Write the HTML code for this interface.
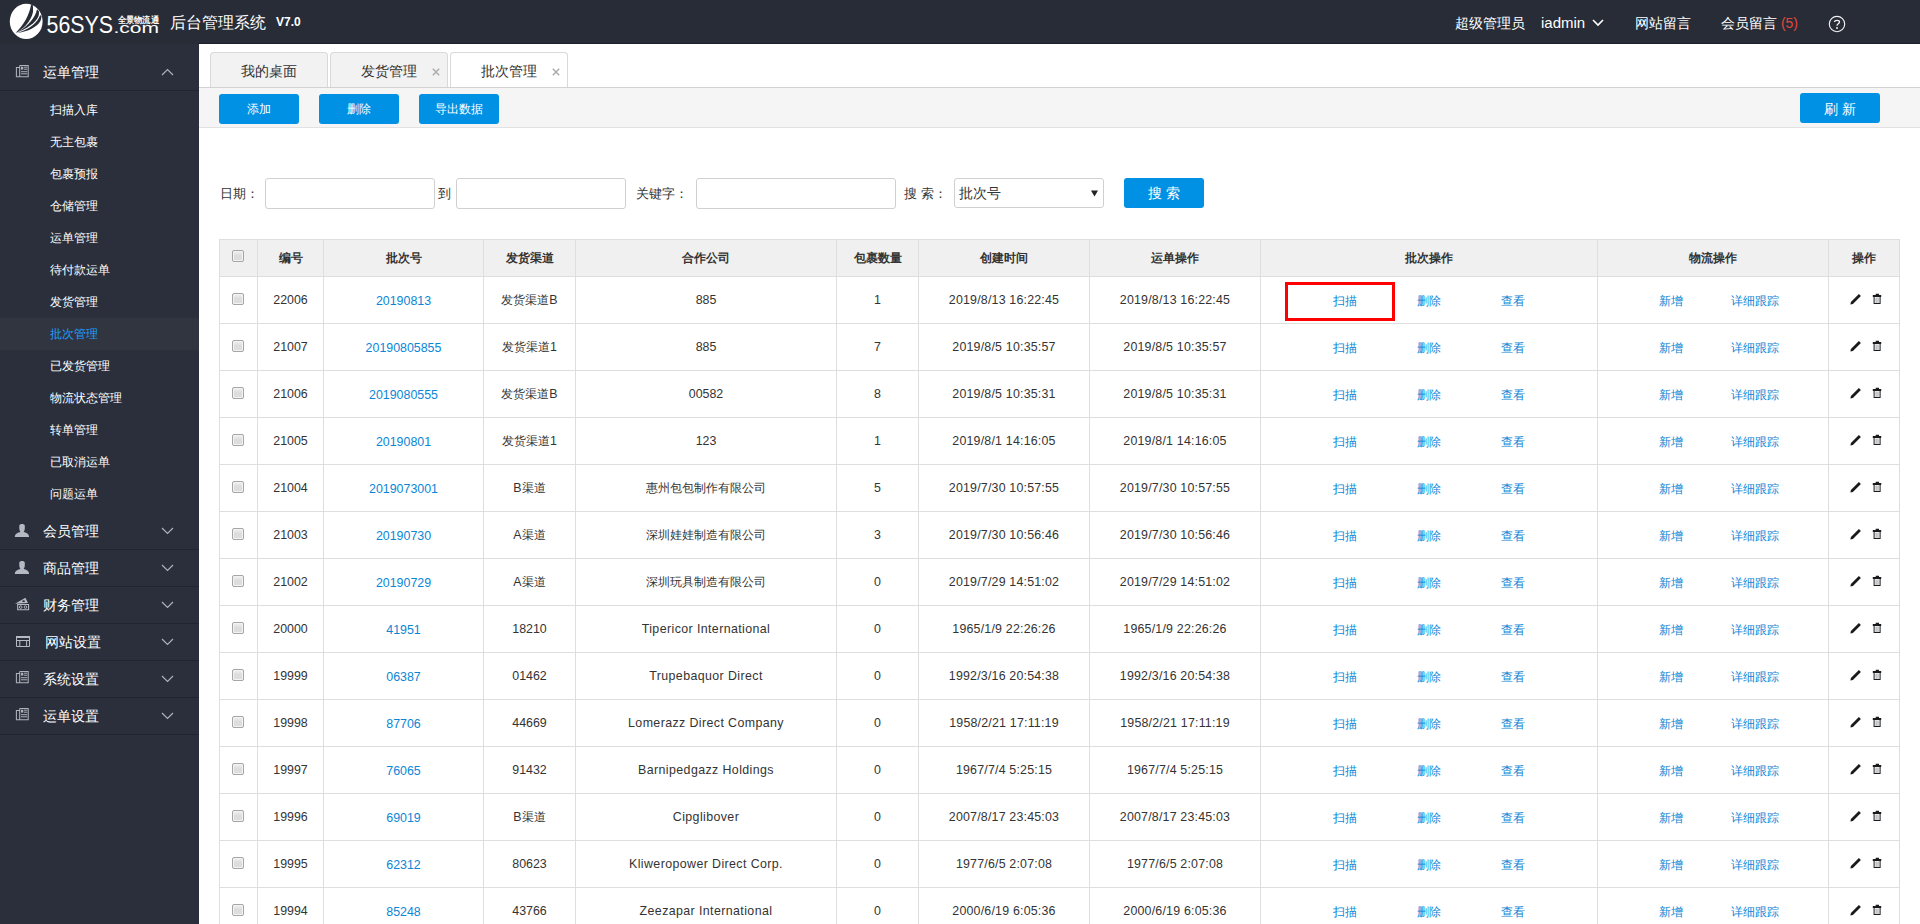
<!DOCTYPE html>
<html><head><meta charset="utf-8">
<style>
*{margin:0;padding:0;box-sizing:border-box}
html,body{width:1920px;height:924px;overflow:hidden;background:#fff;font-family:"Liberation Sans",sans-serif;color:#333}
.abs{position:absolute}
#hd{position:absolute;left:0;top:0;width:1920px;height:44px;background:#282c37}
#hdline{position:absolute;left:198px;top:43px;width:1722px;height:1px;background:#1c1f29}
#side{position:absolute;left:0;top:44px;width:199px;height:880px;background:#2a2f3b}
#sideline{position:absolute;left:198px;top:43px;width:1px;height:881px;background:#1c1f29}
.t{position:absolute;white-space:nowrap;line-height:1}
.hw{color:#fff;font-size:14px}
.grp{position:absolute;left:0;width:199px;height:37px;border-bottom:1px solid #22252f}
.gt{position:absolute;left:43px;top:11px;font-size:14px;color:#fff;line-height:14px}
.sub{position:absolute;left:50px;font-size:12px;color:#fff;line-height:12px}
.chev{position:absolute;left:161px;width:12px;height:8px}
#tabs .tab{position:absolute;top:52px;height:36px;width:118px;border:1px solid #d9d9d9;border-bottom:none;border-radius:4px 4px 0 0;background:#f2f2f2;font-size:14px;color:#333}
#tabs .tab.act{background:#fff}
#bar{position:absolute;left:199px;top:87px;width:1721px;height:41px;background:#f5f5f5;border-top:1px solid #d2d2d2;border-bottom:1px solid #e2e2e2}
.btn{position:absolute;height:30px;width:80px;background:#0091e5;border-radius:3px;color:#fff;font-size:12px;text-align:center;line-height:30px}
.inp{position:absolute;top:178px;height:31px;border:1px solid #d0d0d0;border-radius:3px;background:#fff}
.lbl{position:absolute;font-size:13px;color:#333;line-height:13px;top:187px}
table{position:absolute;left:219px;top:239px;border-collapse:collapse;table-layout:fixed;width:1680px}
td,th{border:1px solid #dedede;text-align:center;font-size:12.4px;color:#333;white-space:nowrap;overflow:hidden}
th{height:37px;background:#f0f0f0;font-weight:bold;font-size:12px;color:#333}
td{height:47px}
td a{color:#0a86d6}
.ops{position:relative}
.ops a{position:absolute;top:18px;font-size:12px;line-height:12px}
.cb{position:absolute;left:12px;top:16px;width:12px;height:12px;border:1px solid #a6a6a6;border-radius:2px;background:linear-gradient(#f2f2f2,#dddddd 45%,#dddddd);box-shadow:inset 0 0 0 1px #f3f3f3}
th .cb{top:10px}
td,th{position:relative}
td>a{position:relative;top:1px}
.en{letter-spacing:0.4px}
.dt{letter-spacing:0.2px}
.ic svg{position:absolute}
.ic{position:relative}
</style></head><body>
<div id="hd"></div>
<div id="side"></div>
<div id="hdline"></div>

<!-- logo -->
<svg class="abs" style="left:0;top:0" width="170" height="44" viewBox="0 0 170 44">
  <ellipse cx="26.2" cy="21.4" rx="16.4" ry="17.6" fill="#fff"/>
  <path d="M31 5 C29.5 14, 24 25, 15.5 33 C22 30, 31 22, 33 12 C33.2 9, 33 6, 32.7 5 Z" fill="#282c37"/>
  <path d="M37 9.3 C35.5 17, 29 26, 16.5 32.8 C26 29, 36 23, 38.6 16 C39 14, 39 12, 38.9 11.2 Z" fill="#282c37"/>
  <path d="M40.2 15 C38 22, 30 29, 17.5 33 C28 31.5, 37 27, 40.4 21 C41 19.5, 41.5 18, 41.5 16.5 Z" fill="#282c37"/>
  <text x="46.5" y="32.8" font-family="Liberation Sans" font-size="23.6" fill="#fff" textLength="66.5" lengthAdjust="spacingAndGlyphs">56SYS</text>
  <text x="113.5" y="32.8" font-family="Liberation Sans" font-size="15.4" fill="#fff" textLength="45.5" lengthAdjust="spacingAndGlyphs">.com</text>
  <text x="117.5" y="23" font-family="Liberation Sans" font-size="8.6" font-weight="bold" fill="#fff" textLength="41.5" lengthAdjust="spacingAndGlyphs">全景物流通</text>
</svg>
<div class="t" style="left:170px;top:15px;font-size:16px;color:#fff">后台管理系统</div>
<div class="t" style="left:276px;top:16px;font-size:12px;color:#fff;font-weight:bold">V7.0</div>

<div class="t hw" style="left:1455px;top:16px">超级管理员</div>
<div class="t hw" style="left:1541px;top:15px;font-size:15px">iadmin</div>
<svg class="abs" style="left:1592px;top:19px" width="12" height="8" viewBox="0 0 12 8"><path d="M1 1 L6 6 L11 1" stroke="#fff" stroke-width="1.6" fill="none"/></svg>
<div class="t hw" style="left:1635px;top:16px">网站留言</div>
<div class="t hw" style="left:1721px;top:16px">会员留言 <span style="color:#e0473c">(5)</span></div>
<svg class="abs" style="left:1828px;top:15px" width="18" height="18" viewBox="0 0 18 18"><circle cx="9" cy="9" r="7.7" stroke="#f2f2f2" stroke-width="1.15" fill="none"/><path d="M6.5 7 C6.5 4.7 11.5 4.7 11.5 7 C11.5 8.8 9 8.8 9 10.8" stroke="#f2f2f2" stroke-width="1.3" fill="none"/><circle cx="9" cy="13" r="0.9" fill="#fff"/></svg>

<!-- sidebar -->
<div class="grp" style="top:54px;height:37px"></div>
<svg class="abs" style="left:12px;top:62px" width="20" height="20" viewBox="0 0 20 20"><path d="M7.7 3.4h8.5v11.4H4.4V5.4h3.3 M7.7 3.4V14.8" stroke="#aeb2bb" stroke-width="1.05" fill="none"/><path d="M9 4.7h2.3v2.9H9z" fill="#aeb2bb"/><path d="M12 5.2h3.2 M12 7.2h3.2 M9 9.7h6.2 M9 11.8h6.2" stroke="#aeb2bb" stroke-width="1"/></svg>
<div class="gt" style="top:65px">运单管理</div>
<svg class="abs" style="left:161px;top:68px" width="13" height="8" viewBox="0 0 13 8"><path d="M1 7 L6.5 1.5 L12 7" stroke="#aeb2ba" stroke-width="1.2" fill="none"/></svg>

<div class="sub" style="top:104px">扫描入库</div>
<div class="sub" style="top:136px">无主包裹</div>
<div class="sub" style="top:168px">包裹预报</div>
<div class="sub" style="top:200px">仓储管理</div>
<div class="sub" style="top:232px">运单管理</div>
<div class="sub" style="top:264px">待付款运单</div>
<div class="sub" style="top:296px">发货管理</div>
<div class="abs" style="left:0;top:318px;width:199px;height:32px;background:#31353f"></div>
<div class="sub" style="top:328px;color:#1e9fff">批次管理</div>
<div class="sub" style="top:360px">已发货管理</div>
<div class="sub" style="top:392px">物流状态管理</div>
<div class="sub" style="top:424px">转单管理</div>
<div class="sub" style="top:456px">已取消运单</div>
<div class="sub" style="top:488px">问题运单</div>

<div class="grp" style="top:513px"></div>
<div class="grp" style="top:550px"></div>
<div class="grp" style="top:587px"></div>
<div class="grp" style="top:624px"></div>
<div class="grp" style="top:661px"></div>
<div class="grp" style="top:698px"></div>
<div class="gt" style="top:524px">会员管理</div>
<div class="gt" style="top:561px">商品管理</div>
<div class="gt" style="top:598px">财务管理</div>
<div class="gt" style="top:635px;left:45px">网站设置</div>
<div class="gt" style="top:672px">系统设置</div>
<div class="gt" style="top:709px">运单设置</div>
<svg class="abs" style="left:12px;top:520px" width="20" height="20" viewBox="0 0 20 20"><path d="M7.3 5.6 C7.3 3.3 12.8 3.3 12.8 5.6 L12.8 8.5 C12.8 10 12.1 11.2 11.7 12 C14.2 12.6 16.9 13.6 17.1 16.9 L2.8 16.9 C3.1 13.6 5.9 12.6 8.4 12 C8 11.2 7.3 10 7.3 8.5 Z" fill="#b5b9c2"/></svg>
<svg class="abs" style="left:161px;top:527px" width="13" height="8" viewBox="0 0 13 8"><path d="M1 1 L6.5 6.5 L12 1" stroke="#aeb2ba" stroke-width="1.2" fill="none"/></svg>
<svg class="abs" style="left:12px;top:557px" width="20" height="20" viewBox="0 0 20 20"><path d="M7.3 5.6 C7.3 3.3 12.8 3.3 12.8 5.6 L12.8 8.5 C12.8 10 12.1 11.2 11.7 12 C14.2 12.6 16.9 13.6 17.1 16.9 L2.8 16.9 C3.1 13.6 5.9 12.6 8.4 12 C8 11.2 7.3 10 7.3 8.5 Z" fill="#b5b9c2"/></svg>
<svg class="abs" style="left:161px;top:564px" width="13" height="8" viewBox="0 0 13 8"><path d="M1 1 L6.5 6.5 L12 1" stroke="#aeb2ba" stroke-width="1.2" fill="none"/></svg>
<svg class="abs" style="left:12px;top:594px" width="20" height="20" viewBox="0 0 20 20"><path d="M3 9.8 L13.4 3.8 L16 8.9 Z" fill="#b5b9c2"/><ellipse cx="11.6" cy="7.2" rx="1.3" ry="0.9" fill="#2a2f3b"/><path d="M5.7 10.5h10.9v5.2H5.7z" stroke="#b5b9c2" stroke-width="1.1" fill="none"/><circle cx="8.7" cy="13.1" r="1.3" stroke="#b5b9c2" stroke-width="1" fill="none"/><circle cx="13.5" cy="13.1" r="1.3" stroke="#b5b9c2" stroke-width="1" fill="none"/></svg>
<svg class="abs" style="left:161px;top:601px" width="13" height="8" viewBox="0 0 13 8"><path d="M1 1 L6.5 6.5 L12 1" stroke="#aeb2ba" stroke-width="1.2" fill="none"/></svg>
<svg class="abs" style="left:12px;top:631px" width="20" height="20" viewBox="0 0 20 20"><path d="M4.5 5.5h13v10h-13z M4.5 9.5h13 M7.8 9.5v6 M14.6 9.5v6" stroke="#b5b9c2" stroke-width="1" fill="none"/><path d="M4 5h14v2H4z" fill="#b5b9c2"/></svg>
<svg class="abs" style="left:161px;top:638px" width="13" height="8" viewBox="0 0 13 8"><path d="M1 1 L6.5 6.5 L12 1" stroke="#aeb2ba" stroke-width="1.2" fill="none"/></svg>
<svg class="abs" style="left:12px;top:668px" width="20" height="20" viewBox="0 0 20 20"><path d="M7.7 3.4h8.5v11.4H4.4V5.4h3.3 M7.7 3.4V14.8" stroke="#aeb2bb" stroke-width="1.05" fill="none"/><path d="M9 4.7h2.3v2.9H9z" fill="#aeb2bb"/><path d="M12 5.2h3.2 M12 7.2h3.2 M9 9.7h6.2 M9 11.8h6.2" stroke="#aeb2bb" stroke-width="1"/></svg>
<svg class="abs" style="left:161px;top:675px" width="13" height="8" viewBox="0 0 13 8"><path d="M1 1 L6.5 6.5 L12 1" stroke="#aeb2ba" stroke-width="1.2" fill="none"/></svg>
<svg class="abs" style="left:12px;top:705px" width="20" height="20" viewBox="0 0 20 20"><path d="M7.7 3.4h8.5v11.4H4.4V5.4h3.3 M7.7 3.4V14.8" stroke="#aeb2bb" stroke-width="1.05" fill="none"/><path d="M9 4.7h2.3v2.9H9z" fill="#aeb2bb"/><path d="M12 5.2h3.2 M12 7.2h3.2 M9 9.7h6.2 M9 11.8h6.2" stroke="#aeb2bb" stroke-width="1"/></svg>
<svg class="abs" style="left:161px;top:712px" width="13" height="8" viewBox="0 0 13 8"><path d="M1 1 L6.5 6.5 L12 1" stroke="#aeb2ba" stroke-width="1.2" fill="none"/></svg>

<!-- tabs -->
<div id="tabs">
 <div class="tab" style="left:210px"><span class="t" style="left:30px;top:11px">我的桌面</span></div>
 <div class="tab" style="left:330px"><span class="t" style="left:30px;top:11px">发货管理</span><svg class="abs" style="left:101px;top:15px" width="8" height="8" viewBox="0 0 8 8"><path d="M0.8 0.8L7.2 7.2M7.2 0.8L0.8 7.2" stroke="#aaacb0" stroke-width="1.5"/></svg></div>
 <div class="tab act" style="left:450px"><span class="t" style="left:30px;top:11px">批次管理</span><svg class="abs" style="left:101px;top:15px" width="8" height="8" viewBox="0 0 8 8"><path d="M0.8 0.8L7.2 7.2M7.2 0.8L0.8 7.2" stroke="#aaacb0" stroke-width="1.5"/></svg></div>
</div>
<div id="bar"></div>
<div class="btn" style="left:219px;top:94px">添加</div>
<div class="btn" style="left:319px;top:94px">删除</div>
<div class="btn" style="left:419px;top:94px">导出数据</div>
<div class="btn" style="left:1800px;top:93px;font-size:14px;line-height:33px">刷 新</div>

<!-- search -->
<div class="lbl" style="left:220px">日期：</div>
<div class="inp" style="left:265px;width:170px"></div>
<div class="lbl" style="left:438px">到</div>
<div class="inp" style="left:456px;width:170px"></div>
<div class="lbl" style="left:636px">关键字：</div>
<div class="inp" style="left:696px;width:200px"></div>
<div class="lbl" style="left:904px">搜 索：</div>
<div class="inp" style="left:954px;width:150px;height:30px"><span class="t" style="left:4px;top:7px;font-size:14px">批次号</span><svg class="abs" style="left:136px;top:11px" width="7" height="7" viewBox="0 0 7 7"><path d="M0 0.5H7L3.5 6.5Z" fill="#222"/></svg></div>
<div class="btn" style="left:1124px;top:178px;font-size:14px">搜 索</div>

<table>
<colgroup><col style="width:38px"><col style="width:66px"><col style="width:160px"><col style="width:92px"><col style="width:261px"><col style="width:82px"><col style="width:171px"><col style="width:171px"><col style="width:337px"><col style="width:231px"><col style="width:71px"></colgroup>
<tr><th><i class="cb"></i></th><th>编号</th><th>批次号</th><th>发货渠道</th><th>合作公司</th><th>包裹数量</th><th>创建时间</th><th>运单操作</th><th>批次操作</th><th>物流操作</th><th>操作</th></tr>
<tr><td><i class="cb"></i></td><td>22006</td><td><a>20190813</a></td><td>发货渠道B</td><td>885</td><td>1</td><td class="dt">2019/8/13 16:22:45</td><td class="dt">2019/8/13 16:22:45</td><td class="ops"><a class="o1" style="left:72px">扫描</a><a class="o2" style="left:156px">删除</a><a class="o3" style="left:240px">查看</a></td><td class="ops"><a class="l1" style="left:61px">新增</a><a class="l2" style="left:133px">详细跟踪</a></td><td class="ic"><svg class="pen" style="left:21px;top:16px" width="12" height="12" viewBox="0 0 12 12"><path d="M0.4 11.5 L0.9 9.0 L8.9 1.0 L10.9 3.0 L2.9 11.0 Z" fill="#1a1a1a"/></svg><svg class="bin" style="left:43px;top:16px" width="10" height="12" viewBox="0 0 10 12"><path d="M0.8 1.9h8.4v2.1H0.8z M3.7 0.7h3.3v1.3H3.7z M1.6 4h1v7.1h-1z M7.6 4h1v7.1h-1z M1.6 10.1h7v1h-7z" fill="#1a1a1a"/><path d="M4.1 4.5v5.4 M6.0 4.5v5.4" stroke="#8a9099" stroke-width="0.9"/></svg></td></tr>
<tr><td><i class="cb"></i></td><td>21007</td><td><a>20190805855</a></td><td>发货渠道1</td><td>885</td><td>7</td><td class="dt">2019/8/5 10:35:57</td><td class="dt">2019/8/5 10:35:57</td><td class="ops"><a class="o1" style="left:72px">扫描</a><a class="o2" style="left:156px">删除</a><a class="o3" style="left:240px">查看</a></td><td class="ops"><a class="l1" style="left:61px">新增</a><a class="l2" style="left:133px">详细跟踪</a></td><td class="ic"><svg class="pen" style="left:21px;top:16px" width="12" height="12" viewBox="0 0 12 12"><path d="M0.4 11.5 L0.9 9.0 L8.9 1.0 L10.9 3.0 L2.9 11.0 Z" fill="#1a1a1a"/></svg><svg class="bin" style="left:43px;top:16px" width="10" height="12" viewBox="0 0 10 12"><path d="M0.8 1.9h8.4v2.1H0.8z M3.7 0.7h3.3v1.3H3.7z M1.6 4h1v7.1h-1z M7.6 4h1v7.1h-1z M1.6 10.1h7v1h-7z" fill="#1a1a1a"/><path d="M4.1 4.5v5.4 M6.0 4.5v5.4" stroke="#8a9099" stroke-width="0.9"/></svg></td></tr>
<tr><td><i class="cb"></i></td><td>21006</td><td><a>2019080555</a></td><td>发货渠道B</td><td>00582</td><td>8</td><td class="dt">2019/8/5 10:35:31</td><td class="dt">2019/8/5 10:35:31</td><td class="ops"><a class="o1" style="left:72px">扫描</a><a class="o2" style="left:156px">删除</a><a class="o3" style="left:240px">查看</a></td><td class="ops"><a class="l1" style="left:61px">新增</a><a class="l2" style="left:133px">详细跟踪</a></td><td class="ic"><svg class="pen" style="left:21px;top:16px" width="12" height="12" viewBox="0 0 12 12"><path d="M0.4 11.5 L0.9 9.0 L8.9 1.0 L10.9 3.0 L2.9 11.0 Z" fill="#1a1a1a"/></svg><svg class="bin" style="left:43px;top:16px" width="10" height="12" viewBox="0 0 10 12"><path d="M0.8 1.9h8.4v2.1H0.8z M3.7 0.7h3.3v1.3H3.7z M1.6 4h1v7.1h-1z M7.6 4h1v7.1h-1z M1.6 10.1h7v1h-7z" fill="#1a1a1a"/><path d="M4.1 4.5v5.4 M6.0 4.5v5.4" stroke="#8a9099" stroke-width="0.9"/></svg></td></tr>
<tr><td><i class="cb"></i></td><td>21005</td><td><a>20190801</a></td><td>发货渠道1</td><td>123</td><td>1</td><td class="dt">2019/8/1 14:16:05</td><td class="dt">2019/8/1 14:16:05</td><td class="ops"><a class="o1" style="left:72px">扫描</a><a class="o2" style="left:156px">删除</a><a class="o3" style="left:240px">查看</a></td><td class="ops"><a class="l1" style="left:61px">新增</a><a class="l2" style="left:133px">详细跟踪</a></td><td class="ic"><svg class="pen" style="left:21px;top:16px" width="12" height="12" viewBox="0 0 12 12"><path d="M0.4 11.5 L0.9 9.0 L8.9 1.0 L10.9 3.0 L2.9 11.0 Z" fill="#1a1a1a"/></svg><svg class="bin" style="left:43px;top:16px" width="10" height="12" viewBox="0 0 10 12"><path d="M0.8 1.9h8.4v2.1H0.8z M3.7 0.7h3.3v1.3H3.7z M1.6 4h1v7.1h-1z M7.6 4h1v7.1h-1z M1.6 10.1h7v1h-7z" fill="#1a1a1a"/><path d="M4.1 4.5v5.4 M6.0 4.5v5.4" stroke="#8a9099" stroke-width="0.9"/></svg></td></tr>
<tr><td><i class="cb"></i></td><td>21004</td><td><a>2019073001</a></td><td>B渠道</td><td>惠州包包制作有限公司</td><td>5</td><td class="dt">2019/7/30 10:57:55</td><td class="dt">2019/7/30 10:57:55</td><td class="ops"><a class="o1" style="left:72px">扫描</a><a class="o2" style="left:156px">删除</a><a class="o3" style="left:240px">查看</a></td><td class="ops"><a class="l1" style="left:61px">新增</a><a class="l2" style="left:133px">详细跟踪</a></td><td class="ic"><svg class="pen" style="left:21px;top:16px" width="12" height="12" viewBox="0 0 12 12"><path d="M0.4 11.5 L0.9 9.0 L8.9 1.0 L10.9 3.0 L2.9 11.0 Z" fill="#1a1a1a"/></svg><svg class="bin" style="left:43px;top:16px" width="10" height="12" viewBox="0 0 10 12"><path d="M0.8 1.9h8.4v2.1H0.8z M3.7 0.7h3.3v1.3H3.7z M1.6 4h1v7.1h-1z M7.6 4h1v7.1h-1z M1.6 10.1h7v1h-7z" fill="#1a1a1a"/><path d="M4.1 4.5v5.4 M6.0 4.5v5.4" stroke="#8a9099" stroke-width="0.9"/></svg></td></tr>
<tr><td><i class="cb"></i></td><td>21003</td><td><a>20190730</a></td><td>A渠道</td><td>深圳娃娃制造有限公司</td><td>3</td><td class="dt">2019/7/30 10:56:46</td><td class="dt">2019/7/30 10:56:46</td><td class="ops"><a class="o1" style="left:72px">扫描</a><a class="o2" style="left:156px">删除</a><a class="o3" style="left:240px">查看</a></td><td class="ops"><a class="l1" style="left:61px">新增</a><a class="l2" style="left:133px">详细跟踪</a></td><td class="ic"><svg class="pen" style="left:21px;top:16px" width="12" height="12" viewBox="0 0 12 12"><path d="M0.4 11.5 L0.9 9.0 L8.9 1.0 L10.9 3.0 L2.9 11.0 Z" fill="#1a1a1a"/></svg><svg class="bin" style="left:43px;top:16px" width="10" height="12" viewBox="0 0 10 12"><path d="M0.8 1.9h8.4v2.1H0.8z M3.7 0.7h3.3v1.3H3.7z M1.6 4h1v7.1h-1z M7.6 4h1v7.1h-1z M1.6 10.1h7v1h-7z" fill="#1a1a1a"/><path d="M4.1 4.5v5.4 M6.0 4.5v5.4" stroke="#8a9099" stroke-width="0.9"/></svg></td></tr>
<tr><td><i class="cb"></i></td><td>21002</td><td><a>20190729</a></td><td>A渠道</td><td>深圳玩具制造有限公司</td><td>0</td><td class="dt">2019/7/29 14:51:02</td><td class="dt">2019/7/29 14:51:02</td><td class="ops"><a class="o1" style="left:72px">扫描</a><a class="o2" style="left:156px">删除</a><a class="o3" style="left:240px">查看</a></td><td class="ops"><a class="l1" style="left:61px">新增</a><a class="l2" style="left:133px">详细跟踪</a></td><td class="ic"><svg class="pen" style="left:21px;top:16px" width="12" height="12" viewBox="0 0 12 12"><path d="M0.4 11.5 L0.9 9.0 L8.9 1.0 L10.9 3.0 L2.9 11.0 Z" fill="#1a1a1a"/></svg><svg class="bin" style="left:43px;top:16px" width="10" height="12" viewBox="0 0 10 12"><path d="M0.8 1.9h8.4v2.1H0.8z M3.7 0.7h3.3v1.3H3.7z M1.6 4h1v7.1h-1z M7.6 4h1v7.1h-1z M1.6 10.1h7v1h-7z" fill="#1a1a1a"/><path d="M4.1 4.5v5.4 M6.0 4.5v5.4" stroke="#8a9099" stroke-width="0.9"/></svg></td></tr>
<tr><td><i class="cb"></i></td><td>20000</td><td><a>41951</a></td><td>18210</td><td class="en">Tipericor International</td><td>0</td><td class="dt">1965/1/9 22:26:26</td><td class="dt">1965/1/9 22:26:26</td><td class="ops"><a class="o1" style="left:72px">扫描</a><a class="o2" style="left:156px">删除</a><a class="o3" style="left:240px">查看</a></td><td class="ops"><a class="l1" style="left:61px">新增</a><a class="l2" style="left:133px">详细跟踪</a></td><td class="ic"><svg class="pen" style="left:21px;top:16px" width="12" height="12" viewBox="0 0 12 12"><path d="M0.4 11.5 L0.9 9.0 L8.9 1.0 L10.9 3.0 L2.9 11.0 Z" fill="#1a1a1a"/></svg><svg class="bin" style="left:43px;top:16px" width="10" height="12" viewBox="0 0 10 12"><path d="M0.8 1.9h8.4v2.1H0.8z M3.7 0.7h3.3v1.3H3.7z M1.6 4h1v7.1h-1z M7.6 4h1v7.1h-1z M1.6 10.1h7v1h-7z" fill="#1a1a1a"/><path d="M4.1 4.5v5.4 M6.0 4.5v5.4" stroke="#8a9099" stroke-width="0.9"/></svg></td></tr>
<tr><td><i class="cb"></i></td><td>19999</td><td><a>06387</a></td><td>01462</td><td class="en">Trupebaquor Direct</td><td>0</td><td class="dt">1992/3/16 20:54:38</td><td class="dt">1992/3/16 20:54:38</td><td class="ops"><a class="o1" style="left:72px">扫描</a><a class="o2" style="left:156px">删除</a><a class="o3" style="left:240px">查看</a></td><td class="ops"><a class="l1" style="left:61px">新增</a><a class="l2" style="left:133px">详细跟踪</a></td><td class="ic"><svg class="pen" style="left:21px;top:16px" width="12" height="12" viewBox="0 0 12 12"><path d="M0.4 11.5 L0.9 9.0 L8.9 1.0 L10.9 3.0 L2.9 11.0 Z" fill="#1a1a1a"/></svg><svg class="bin" style="left:43px;top:16px" width="10" height="12" viewBox="0 0 10 12"><path d="M0.8 1.9h8.4v2.1H0.8z M3.7 0.7h3.3v1.3H3.7z M1.6 4h1v7.1h-1z M7.6 4h1v7.1h-1z M1.6 10.1h7v1h-7z" fill="#1a1a1a"/><path d="M4.1 4.5v5.4 M6.0 4.5v5.4" stroke="#8a9099" stroke-width="0.9"/></svg></td></tr>
<tr><td><i class="cb"></i></td><td>19998</td><td><a>87706</a></td><td>44669</td><td class="en">Lomerazz Direct Company</td><td>0</td><td class="dt">1958/2/21 17:11:19</td><td class="dt">1958/2/21 17:11:19</td><td class="ops"><a class="o1" style="left:72px">扫描</a><a class="o2" style="left:156px">删除</a><a class="o3" style="left:240px">查看</a></td><td class="ops"><a class="l1" style="left:61px">新增</a><a class="l2" style="left:133px">详细跟踪</a></td><td class="ic"><svg class="pen" style="left:21px;top:16px" width="12" height="12" viewBox="0 0 12 12"><path d="M0.4 11.5 L0.9 9.0 L8.9 1.0 L10.9 3.0 L2.9 11.0 Z" fill="#1a1a1a"/></svg><svg class="bin" style="left:43px;top:16px" width="10" height="12" viewBox="0 0 10 12"><path d="M0.8 1.9h8.4v2.1H0.8z M3.7 0.7h3.3v1.3H3.7z M1.6 4h1v7.1h-1z M7.6 4h1v7.1h-1z M1.6 10.1h7v1h-7z" fill="#1a1a1a"/><path d="M4.1 4.5v5.4 M6.0 4.5v5.4" stroke="#8a9099" stroke-width="0.9"/></svg></td></tr>
<tr><td><i class="cb"></i></td><td>19997</td><td><a>76065</a></td><td>91432</td><td class="en">Barnipedgazz Holdings</td><td>0</td><td class="dt">1967/7/4 5:25:15</td><td class="dt">1967/7/4 5:25:15</td><td class="ops"><a class="o1" style="left:72px">扫描</a><a class="o2" style="left:156px">删除</a><a class="o3" style="left:240px">查看</a></td><td class="ops"><a class="l1" style="left:61px">新增</a><a class="l2" style="left:133px">详细跟踪</a></td><td class="ic"><svg class="pen" style="left:21px;top:16px" width="12" height="12" viewBox="0 0 12 12"><path d="M0.4 11.5 L0.9 9.0 L8.9 1.0 L10.9 3.0 L2.9 11.0 Z" fill="#1a1a1a"/></svg><svg class="bin" style="left:43px;top:16px" width="10" height="12" viewBox="0 0 10 12"><path d="M0.8 1.9h8.4v2.1H0.8z M3.7 0.7h3.3v1.3H3.7z M1.6 4h1v7.1h-1z M7.6 4h1v7.1h-1z M1.6 10.1h7v1h-7z" fill="#1a1a1a"/><path d="M4.1 4.5v5.4 M6.0 4.5v5.4" stroke="#8a9099" stroke-width="0.9"/></svg></td></tr>
<tr><td><i class="cb"></i></td><td>19996</td><td><a>69019</a></td><td>B渠道</td><td class="en">Cipglibover</td><td>0</td><td class="dt">2007/8/17 23:45:03</td><td class="dt">2007/8/17 23:45:03</td><td class="ops"><a class="o1" style="left:72px">扫描</a><a class="o2" style="left:156px">删除</a><a class="o3" style="left:240px">查看</a></td><td class="ops"><a class="l1" style="left:61px">新增</a><a class="l2" style="left:133px">详细跟踪</a></td><td class="ic"><svg class="pen" style="left:21px;top:16px" width="12" height="12" viewBox="0 0 12 12"><path d="M0.4 11.5 L0.9 9.0 L8.9 1.0 L10.9 3.0 L2.9 11.0 Z" fill="#1a1a1a"/></svg><svg class="bin" style="left:43px;top:16px" width="10" height="12" viewBox="0 0 10 12"><path d="M0.8 1.9h8.4v2.1H0.8z M3.7 0.7h3.3v1.3H3.7z M1.6 4h1v7.1h-1z M7.6 4h1v7.1h-1z M1.6 10.1h7v1h-7z" fill="#1a1a1a"/><path d="M4.1 4.5v5.4 M6.0 4.5v5.4" stroke="#8a9099" stroke-width="0.9"/></svg></td></tr>
<tr><td><i class="cb"></i></td><td>19995</td><td><a>62312</a></td><td>80623</td><td class="en">Kliweropower Direct Corp.</td><td>0</td><td class="dt">1977/6/5 2:07:08</td><td class="dt">1977/6/5 2:07:08</td><td class="ops"><a class="o1" style="left:72px">扫描</a><a class="o2" style="left:156px">删除</a><a class="o3" style="left:240px">查看</a></td><td class="ops"><a class="l1" style="left:61px">新增</a><a class="l2" style="left:133px">详细跟踪</a></td><td class="ic"><svg class="pen" style="left:21px;top:16px" width="12" height="12" viewBox="0 0 12 12"><path d="M0.4 11.5 L0.9 9.0 L8.9 1.0 L10.9 3.0 L2.9 11.0 Z" fill="#1a1a1a"/></svg><svg class="bin" style="left:43px;top:16px" width="10" height="12" viewBox="0 0 10 12"><path d="M0.8 1.9h8.4v2.1H0.8z M3.7 0.7h3.3v1.3H3.7z M1.6 4h1v7.1h-1z M7.6 4h1v7.1h-1z M1.6 10.1h7v1h-7z" fill="#1a1a1a"/><path d="M4.1 4.5v5.4 M6.0 4.5v5.4" stroke="#8a9099" stroke-width="0.9"/></svg></td></tr>
<tr><td><i class="cb"></i></td><td>19994</td><td><a>85248</a></td><td>43766</td><td class="en">Zeezapar International</td><td>0</td><td class="dt">2000/6/19 6:05:36</td><td class="dt">2000/6/19 6:05:36</td><td class="ops"><a class="o1" style="left:72px">扫描</a><a class="o2" style="left:156px">删除</a><a class="o3" style="left:240px">查看</a></td><td class="ops"><a class="l1" style="left:61px">新增</a><a class="l2" style="left:133px">详细跟踪</a></td><td class="ic"><svg class="pen" style="left:21px;top:16px" width="12" height="12" viewBox="0 0 12 12"><path d="M0.4 11.5 L0.9 9.0 L8.9 1.0 L10.9 3.0 L2.9 11.0 Z" fill="#1a1a1a"/></svg><svg class="bin" style="left:43px;top:16px" width="10" height="12" viewBox="0 0 10 12"><path d="M0.8 1.9h8.4v2.1H0.8z M3.7 0.7h3.3v1.3H3.7z M1.6 4h1v7.1h-1z M7.6 4h1v7.1h-1z M1.6 10.1h7v1h-7z" fill="#1a1a1a"/><path d="M4.1 4.5v5.4 M6.0 4.5v5.4" stroke="#8a9099" stroke-width="0.9"/></svg></td></tr>
</table>
<div class="abs" style="left:1285px;top:282px;width:110px;height:39px;border:3px solid #f00"></div>
</body></html>
